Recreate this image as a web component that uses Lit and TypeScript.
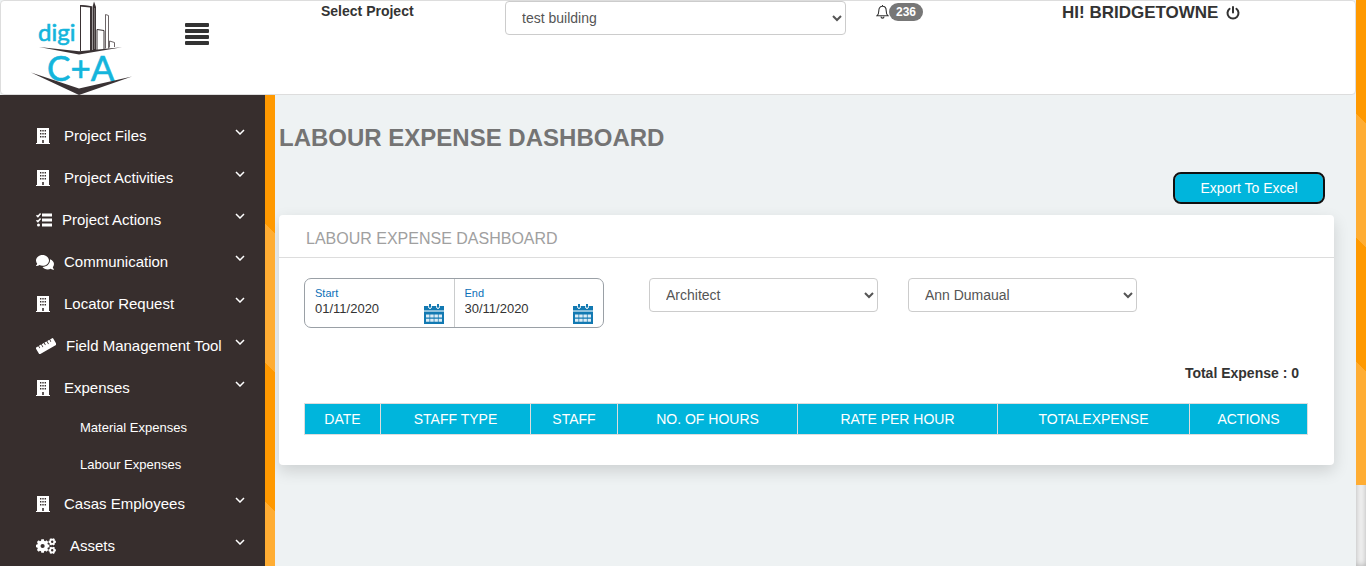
import { LitElement, html, css, svg, nothing } from "lit";
import { customElement, state } from "lit/decorators.js";
import { classMap } from "lit/directives/class-map.js";

type IconName = "building" | "tasks" | "comments" | "ruler" | "cogs";

interface NavItem {
  label: string;
  icon: IconName;
  children?: string[];
}

const NAV: NavItem[] = [
  { label: "Project Files", icon: "building" },
  { label: "Project Activities", icon: "building" },
  { label: "Project Actions", icon: "tasks" },
  { label: "Communication", icon: "comments" },
  { label: "Locator Request", icon: "building" },
  { label: "Field Management Tool", icon: "ruler" },
  { label: "Expenses", icon: "building", children: ["Material Expenses", "Labour Expenses"] },
  { label: "Casas Employees", icon: "building" },
  { label: "Assets", icon: "cogs" },
];

const COLUMNS = [
  { label: "DATE", share: 76 },
  { label: "STAFF TYPE", share: 150 },
  { label: "STAFF", share: 87 },
  { label: "NO. OF HOURS", share: 180 },
  { label: "RATE PER HOUR", share: 200 },
  { label: "TOTALEXPENSE", share: 192 },
  { label: "ACTIONS", share: 118 },
];
const TOTAL_SHARE = COLUMNS.reduce((sum, c) => sum + c.share, 0);

const gear = (cx: number, cy: number, r: number, hole: number, teeth: number) => {
  const points: string[] = [];
  for (let i = 0; i < teeth; i++) {
    const mid = (i / teeth) * Math.PI * 2;
    const step = (Math.PI * 2) / teeth;
    for (const [offset, radius] of [[-0.36, 0.8], [-0.24, 1], [0.24, 1], [0.36, 0.8]]) {
      const a = mid + offset * step;
      points.push(`${(cx + Math.cos(a) * r * radius).toFixed(2)} ${(cy + Math.sin(a) * r * radius).toFixed(2)}`);
    }
  }
  return svg`<path fill-rule="evenodd" d="M${points.join("L")}Z M${cx - hole} ${cy}a${hole} ${hole} 0 1 0 ${hole * 2} 0a${hole} ${hole} 0 1 0 ${-hole * 2} 0Z"/>`;
};

const ICONS: Record<IconName, { width: number; shape: unknown }> = {
  building: {
    width: 14,
    shape: svg`<path fill-rule="evenodd" d="M1 0h12v15h1v1H0v-1h1zM4 2v1.600h1.400V2zM6.300 2v1.600h1.400V2zM8.600 2v1.600H10V2zM4 5v1.600h1.400V5zM6.300 5v1.600h1.400V5zM8.600 5v1.600H10V5zM4 8v1.600h1.400V8zM6.300 8v1.600h1.400V8zM8.600 8v1.600H10V8zM6.200 12v3h1.600v-3z"/>`,
  },
  tasks: {
    width: 16,
    shape: svg`<path d="M6 1.500h10v3H6zM6 6.500h10v3H6zM6 11.500h10v3H6z"/><circle cx="2.500" cy="13" r="1.500"/><path d="M.5 3.200l1.400 1.400L4.600 1.500M.5 8.200l1.400 1.400L4.600 6.500" fill="none" stroke="currentColor" stroke-width="1.500"/>`,
  },
  comments: {
    width: 18,
    shape: svg`<path d="M13 6.500C13 3.500 10.100 1 6.500 1S0 3.500 0 6.500c0 1.200.5 2.300 1.200 3.200C.8 10.600.1 11.400 0 11.500c-.1.200 0 .5.300.5 1.300 0 2.400-.4 3.200-.9.900.400 1.900.7 3 .7 3.600 0 6.500-2.300 6.500-5.300zM16.800 13.200c.7-.9 1.200-2 1.200-3.100 0-2.200-1.600-4-4-4.800.4 4.200-3 7.500-7.500 7.600 1.100 1.600 3 2.500 5.200 2.500 1.100 0 2.100-.2 3-.6.8.5 1.900.9 3 .9.300 0 .4-.3.200-.5-.1-.1-.7-.8-1.100-2z"/>`,
  },
  ruler: {
    width: 20,
    shape: svg`<g transform="rotate(-30 10 8)"><path d="M.8 4.300h2.400v2.500h.8v-2.500h2.400v3.200h.8v-3.200h2.400v2.500h.8v-2.500h2.400v3.200h.8v-3.200h2.400v2.500h.8v-2.500h2.400q.8 0 .8.800v6.200q0 .8-.8.800H.8q-.8 0-.8-.8V5.100q0-.8.8-.8z"/></g>`,
  },
  cogs: {
    width: 20,
    shape: svg`${gear(6.6, 8, 6.9, 2.1, 8)}${gear(16.2, 3.800, 3.800, 1.200, 6)}${gear(16.2, 12.300, 3.800, 1.200, 6)}`,
  },
};

@customElement("app-logo")
export class AppLogo extends LitElement {
  static styles = css`
    :host { display: block; }
    .logo { display: block; }
    .word { font-family: Lato, "Open Sans", sans-serif; fill: #14b5dc; stroke: #14b5dc; stroke-width: 0.6px; }
    .small { font-size: 24px; }
    .large { font-size: 35px; }
  `;

  render() {
    return html`
      <svg class="logo" width="102" height="94" viewBox="30 0 102 94" role="img" aria-label="digi C+A">
        <g fill="#fff" stroke="#3a3234" stroke-width="1">
          <path d="M80.500 50V4.500l10 1V49"/>
          <path d="M97 49V28.500l7 1V48"/>
          <path d="M105.500 47.500V13.500l3 1v33" stroke="#6d6668"/>
          <path d="M109.500 46.500V40l5 1.500V46" stroke="#6d6668"/>
        </g>
        <path d="M80 4l12 1.200V50h-2V6.500L80 5.500z" fill="#3a3234"/>
        <path d="M92.500 49V6l1.500-5.500L96 6v43z" fill="#3a3234"/>
        <path d="M94.600 7v41" stroke="#8c8587" stroke-width=".8"/>
        <path d="M39 46l40 4.200 43-4-43 7.200z" fill="#3a3234"/>
        <text class="word small" x="38" y="40">digi</text>
        <text class="word large" x="47" y="80">C+A</text>
        <path d="M31 71.500l48 16 53-12-53 18.500z" fill="#3a3234"/>
      </svg>
    `;
  }
}

@customElement("app-header")
export class AppHeader extends LitElement {
  static styles = css`
    :host { display: block; }
    .bar {
      box-sizing: border-box;
      height: 95px;
      display: grid;
      grid-template-columns: 184px 136px 184fr 341fr 216fr 293fr;
      align-items: start;
      background: #fff;
      border: 1px solid #ddd;
      border-radius: 4px;
      color: #333;
    }
    .logo { padding-left: 29px; }
    .menu {
      justify-self: start;
      margin: 22px 0 0;
      padding: 0;
      border: 0;
      background: none;
      cursor: pointer;
      line-height: 0;
    }
    .caption { font-size: 14px; line-height: 20px; font-weight: 700; }
    .project {
      width: 100%;
      height: 34px;
      padding: 6px 12px;
      border: 1px solid #ccc;
      border-radius: 4px;
      background: #fff;
      color: #555;
      font: 14px/20px "Liberation Sans", Arial, sans-serif;
    }
    .alerts { display: flex; align-items: center; padding: 2px 0 0 30px; height: 18px; }
    .badge {
      padding: 3px 7px;
      border-radius: 10px;
      background: #777;
      color: #fff;
      font-size: 12px;
      line-height: 12px;
      font-weight: 700;
    }
    .user {
      display: flex;
      align-items: center;
      gap: 8px;
      font-size: 17px;
      line-height: 24px;
      font-weight: 700;
    }
    .power { padding: 0; border: 0; background: none; color: inherit; line-height: 0; cursor: pointer; }
  `;

  render() {
    return html`
      <header class="bar">
        <app-logo class="logo"></app-logo>
        <button class="menu" aria-label="Toggle menu">
          <svg width="25" height="24" viewBox="0 0 25 24" fill="#333">
            <rect x="0" y="0" width="24" height="4" rx="1"/><rect x="0" y="6" width="24" height="4" rx="1"/>
            <rect x="0" y="12" width="24" height="4" rx="1"/><rect x="0" y="18" width="24" height="4" rx="1"/>
          </svg>
        </button>
        <label class="caption" for="project">Select Project</label>
        <select class="project" id="project"><option>test building</option></select>
        <div class="alerts">
          <svg width="13" height="15" viewBox="0 0 13 15" fill="none" stroke="#333" stroke-width="1.100">
            <path d="M6.500 0v1.300M1 10.800c1.300-1 1.800-2.300 1.800-5 0-2.800 1.400-4.500 3.700-4.500s3.700 1.700 3.700 4.500c0 2.700.5 4 1.800 5z"/>
            <path d="M5 11.500c0 2.200 3 2.200 3 0"/>
          </svg>
          <span class="badge">236</span>
        </div>
        <div class="user">
          <span>HI! BRIDGETOWNE</span>
          <button class="power" aria-label="Log out">
            <svg width="14" height="14" viewBox="0 0 14 14" fill="none" stroke="#333" stroke-width="2" stroke-linecap="round">
              <path d="M7 1v5.500M3.600 2.800a5.500 5.500 0 1 0 6.800 0"/>
            </svg>
          </button>
        </div>
      </header>
    `;
  }
}

@customElement("app-sidebar")
export class AppSidebar extends LitElement {
  static styles = css`
    :host { display: block; box-sizing: border-box; background: #372e2d; overflow: hidden; padding-top: 20px; }
    .list { margin: 0; padding: 0; list-style: none; }
    .item {
      display: flex;
      align-items: center;
      height: 42px;
      padding: 0 20px 0 36px;
      color: #fff;
      font-size: 15px;
      line-height: 20px;
      text-decoration: none;
      white-space: nowrap;
    }
    .icon { flex: none; margin-right: 10px; }
    .icon.building, .icon.cogs { margin-right: 14px; }
    .label { flex: 1; }
    .chevron { flex: none; margin-bottom: 8px; }
    .child {
      display: block;
      padding: 0 0 0 80px;
      color: #fff;
      font-size: 13px;
      line-height: 37px;
      text-decoration: none;
    }
  `;

  render() {
    return html`
      <nav>
        <ul class="list">
          ${NAV.map((item) => {
            const icon = ICONS[item.icon];
            return html`
              <li>
                <a class="item" href="#">
                  <svg class=${classMap({ icon: true, [item.icon]: true })} width=${icon.width} height="16"
                    viewBox="0 0 ${icon.width} 16" fill="currentColor" aria-hidden="true">${icon.shape}</svg>
                  <span class="label">${item.label}</span>
                  <svg class="chevron" width="10" height="6" viewBox="0 0 10 6" fill="none" stroke="currentColor" stroke-width="1.500">
                    <path d="M1 1l4 4 4-4"/>
                  </svg>
                </a>
                ${item.children
                  ? html`<ul class="list">
                      ${item.children.map((child) => html`<li><a class="child" href="#">${child}</a></li>`)}
                    </ul>`
                  : nothing}
              </li>
            `;
          })}
        </ul>
      </nav>
    `;
  }
}

@customElement("date-range")
export class DateRange extends LitElement {
  static styles = css`
    :host { display: block; }
    .range { display: flex; box-sizing: border-box; height: 50px; border: 1px solid #9aa0a6; border-radius: 7px; }
    .half { flex: 1; display: flex; align-items: flex-end; min-width: 0; padding: 0 10px 3px; }
    .half + .half { border-left: 1px solid #cacccd; }
    .field { flex: 1; min-width: 0; align-self: flex-start; padding-top: 8px; }
    .caption { display: block; color: #0b70b8; font-size: 11px; line-height: 13px; }
    .value {
      display: block;
      width: 100%;
      box-sizing: border-box;
      height: 18px;
      padding: 0;
      border: 0;
      outline: 0;
      background: none;
      color: #333;
      font: 13px/18px "Liberation Sans", Arial, sans-serif;
    }
    .open { padding: 0; border: 0; background: none; line-height: 0; cursor: pointer; }
  `;

  private half(id: string, caption: string, value: string) {
    return html`
      <div class="half">
        <div class="field">
          <label class="caption" for=${id}>${caption}</label>
          <input class="value" id=${id} type="text" .value=${value} />
        </div>
        <button class="open" aria-label="Open ${caption} calendar">
          <svg width="20" height="20" viewBox="0 0 20 20">
            <path d="M0 2h20v4.500H0zM0 8h20v12H0z" fill="#1279b2"/>
            <path d="M0 6.500h20V8H0z" fill="#8ec1dd"/>
            <path d="M4.500 0v2.500q0 2 1.500 2t1.500-2V0M12.500 0v2.500q0 2 1.500 2t1.500-2V0" fill="#1279b2" stroke="#fff" stroke-width="1"/>
            <path d="M2 10.500h3.500v3H2zM6.200 10.500h3.500v3H6.200zM10.400 10.500h3.500v3h-3.500zM14.600 10.500H18v3h-3.400zM2 14.800h3.500v3H2zM6.200 14.800h3.500v3H6.200zM10.400 14.800h3.500v3h-3.500zM14.600 14.800H18v3h-3.400z" fill="#dcecf5"/>
          </svg>
        </button>
      </div>
    `;
  }

  render() {
    return html`<div class="range">
      ${this.half("start", "Start", "01/11/2020")}${this.half("end", "End", "30/11/2020")}
    </div>`;
  }
}

@customElement("expense-dashboard")
export class ExpenseDashboard extends LitElement {
  static styles = css`
    :host { display: block; background: #eef2f3; padding: 0 22px 0 4px; overflow: hidden; }
    .title { margin: 27px 0 0; font-size: 24px; line-height: 32px; font-weight: 700; color: #747474; }
    .actions { display: flex; justify-content: flex-end; padding: 20px 11px 13px 0; }
    .export {
      width: 148px;
      height: 28px;
      padding: 0;
      border: 0;
      border-radius: 6px;
      background: #00b5dc;
      color: #fff;
      font: 14px/20px "Liberation Sans", Arial, sans-serif;
      outline: 2px solid #101010;
    }
    .card {
      background: #fff;
      border-radius: 4px;
      box-shadow: 0 6px 16px rgba(0, 0, 0, 0.14);
    }
    .head {
      margin: 0;
      padding: 13px 27px 8px;
      border-bottom: 1px solid #ddd;
      color: #a0a0a0;
      font-size: 16px;
      line-height: 21px;
      font-weight: 400;
    }
    .body { padding: 20px 26px 30px 25px; }
    .filters { display: flex; align-items: flex-start; gap: 30px; }
    .dates { flex: none; width: 300px; margin-right: 15px; }
    .select {
      width: 22.8%;
      height: 34px;
      padding: 6px 12px;
      border: 1px solid #ccc;
      border-radius: 4px;
      background: #fff;
      color: #555;
      font: 14px/20px "Liberation Sans", Arial, sans-serif;
    }
    .total { margin: 35px 9px 20px; text-align: right; font-size: 14px; line-height: 20px; font-weight: 700; color: #333; }
    .table { width: 100%; table-layout: fixed; border-collapse: collapse; }
    .cell {
      height: 30px;
      padding: 0;
      border: 1px solid #ddd;
      background: #00b5dc;
      color: #fff;
      font-size: 14px;
      line-height: 20px;
      font-weight: 400;
      text-align: center;
    }
  `;

  @state() private total = 0;

  render() {
    return html`
      <h1 class="title">LABOUR EXPENSE DASHBOARD</h1>
      <div class="actions"><button class="export">Export To Excel</button></div>
      <section class="card">
        <h2 class="head">LABOUR EXPENSE DASHBOARD</h2>
        <div class="body">
          <div class="filters">
            <date-range class="dates"></date-range>
            <select class="select" aria-label="Staff type"><option>Architect</option></select>
            <select class="select" aria-label="Staff"><option>Ann Dumaual</option></select>
          </div>
          <p class="total">Total Expense : ${this.total}</p>
          <table class="table">
            <colgroup>
              ${COLUMNS.map((c) => html`<col style="width:${(c.share / TOTAL_SHARE) * 100}%" />`)}
            </colgroup>
            <thead>
              <tr>${COLUMNS.map((c) => html`<th class="cell" scope="col">${c.label}</th>`)}</tr>
            </thead>
          </table>
        </div>
      </section>
    `;
  }
}

@customElement("app-root")
export class AppRoot extends LitElement {
  static styles = css`
    :host {
      display: flex;
      height: 100vh;
      overflow: hidden;
      background: #eef2f3;
      font-family: "Liberation Sans", Arial, sans-serif;
    }
    .page { flex: 1; min-width: 0; display: flex; flex-direction: column; }
    .work { flex: 1; min-height: 0; display: flex; }
    .side { flex: none; width: 265px; }
    .main { flex: 1; min-width: 0; }
    .track {
      flex: none;
      width: 10px;
      background-color: #f5f5f5;
      box-shadow: inset 0 0 6px rgba(0, 0, 0, 0.3);
    }
    .thumb {
      background-color: #ff9900;
      background-image: linear-gradient(45deg, #ffad33 25%, #ff9900 25%, #ff9900 50%, #ffad33 50%, #ffad33 75%, #ff9900 75%);
    }
    .track .thumb { height: 485px; }
    .rail { flex: none; width: 10px; background-size: 10px 545px; }
  `;

  render() {
    return html`
      <div class="page">
        <app-header></app-header>
        <div class="work">
          <app-sidebar class="side"></app-sidebar>
          <div class="rail thumb"></div>
          <expense-dashboard class="main"></expense-dashboard>
        </div>
      </div>
      <div class="track"><div class="thumb"></div></div>
    `;
  }
}
